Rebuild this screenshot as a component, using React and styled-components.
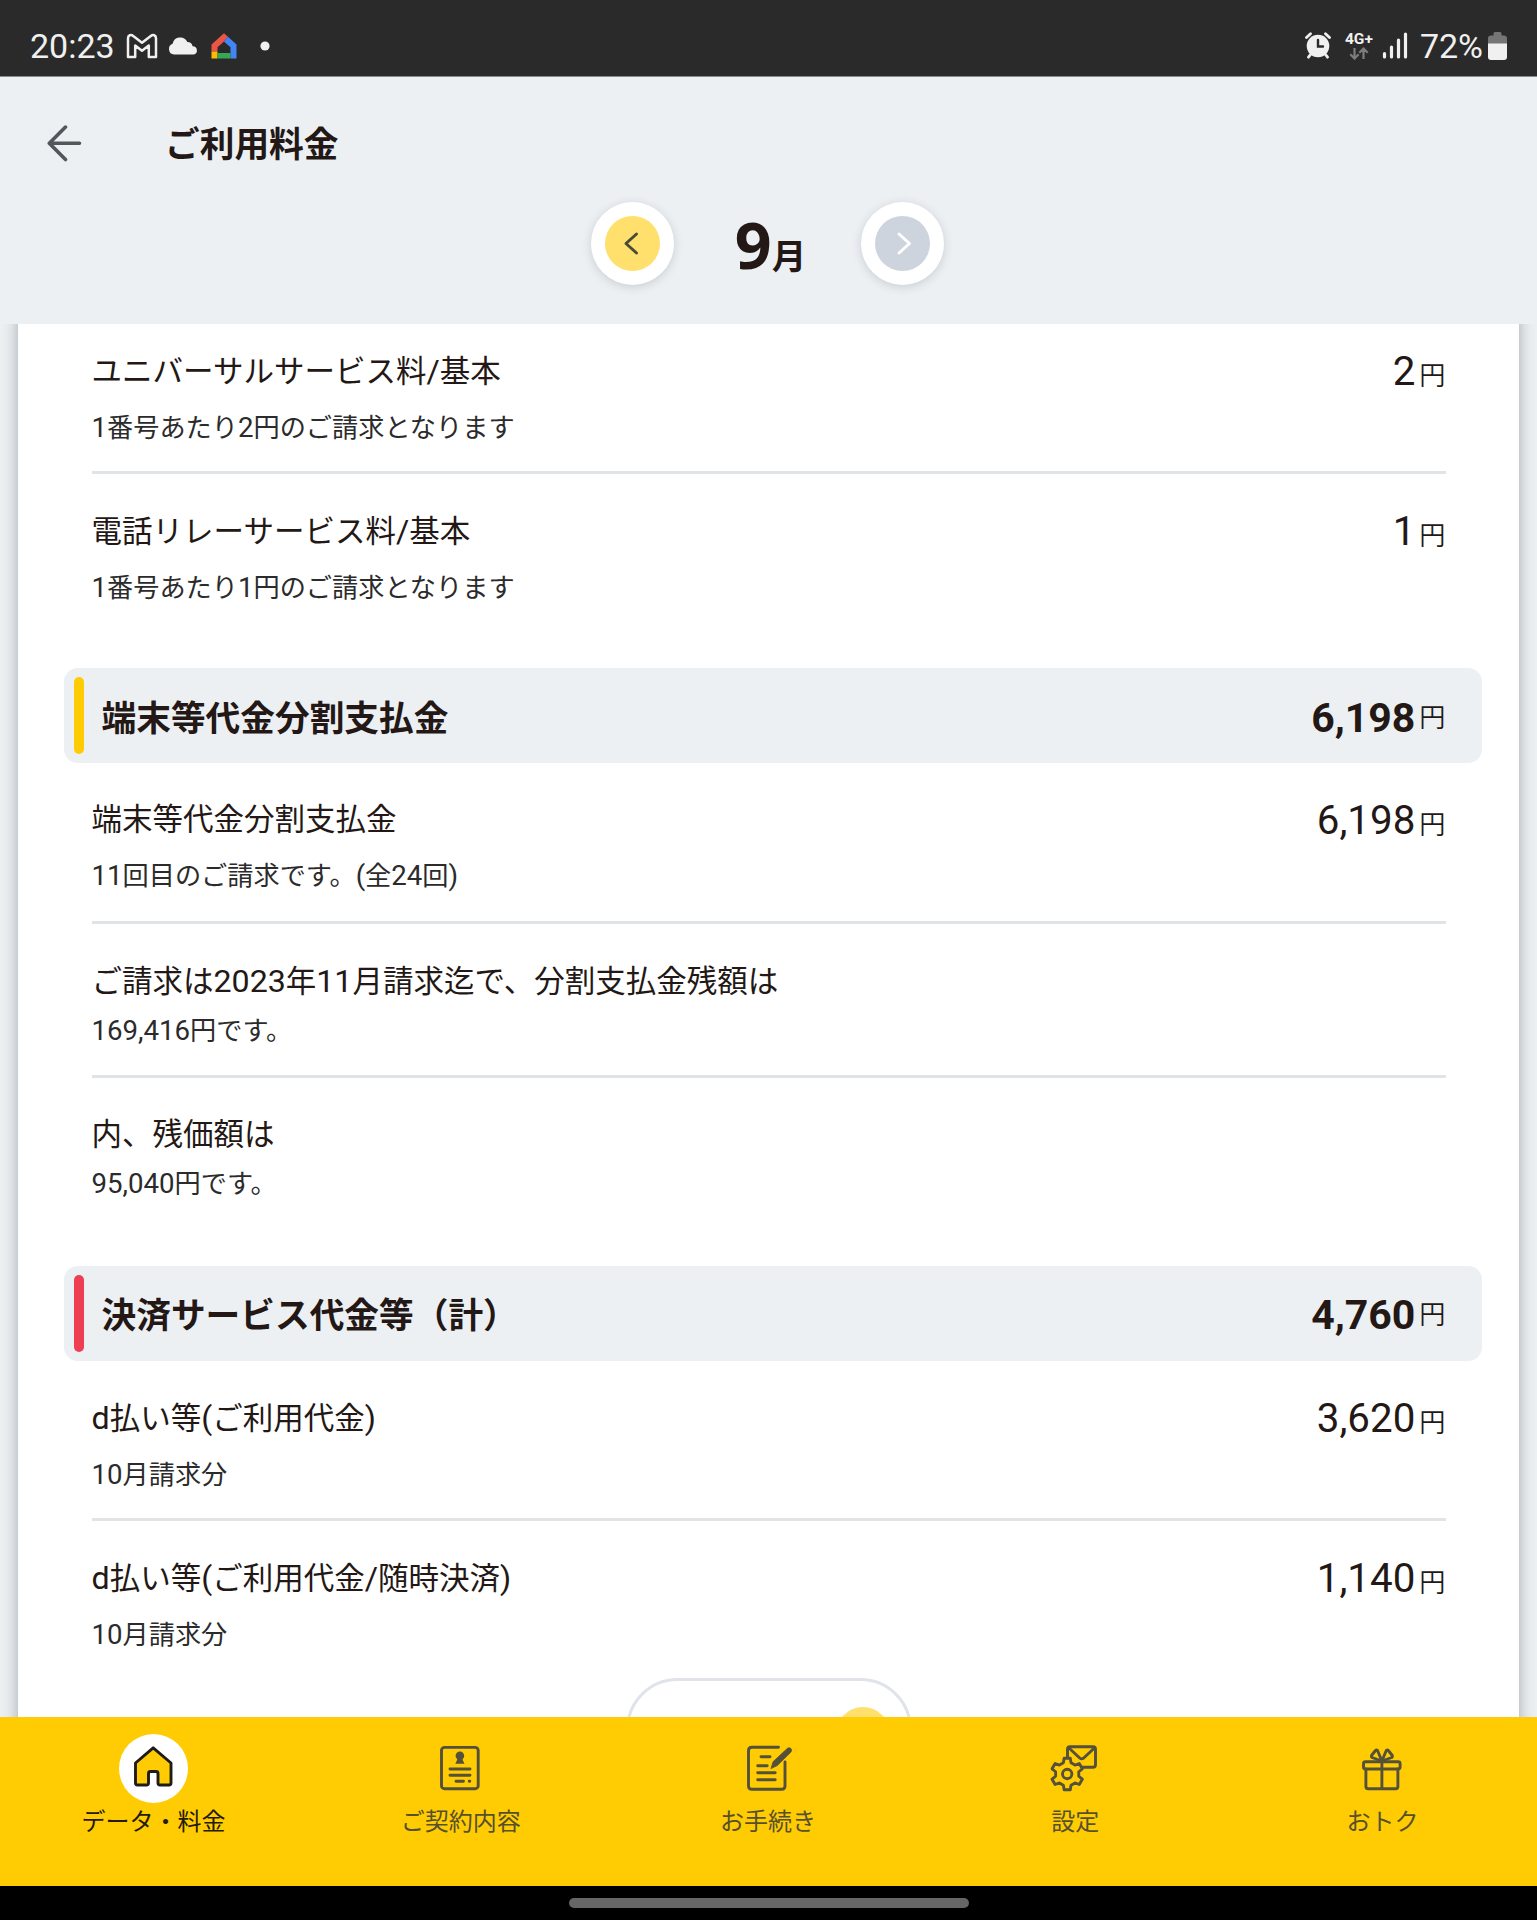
import styled, { createGlobalStyle } from "styled-components";

const GlobalStyle = createGlobalStyle`
  * {
    box-sizing: border-box;
  }
  body {
    margin: 0;
    background: #000;
    font-family: Roboto, "Noto Sans CJK JP", sans-serif;
    color: #231815;
  }
`;

const Screen = styled.div`
  width: 1537px;
  height: 1920px;
  display: flex;
  flex-direction: column;
  overflow: hidden;
  background: #ecf0f3;
`;

const StatusBar = styled.div`
  flex: none;
  height: 77px;
  padding: 15px 30px 0 30px;
  display: flex;
  justify-content: space-between;
  align-items: flex-start;
  background: #2a2a2a;
  border-bottom: 1px solid #8a8a8c;
  color: #f0f0f0;
`;

const StatusGroup = styled.div`
  height: 61px;
  display: flex;
  align-items: center;
`;

const StatusText = styled.span`
  padding-top: 1px;
  font-size: 34px;
  line-height: 61px;
  white-space: nowrap;
`;

const StatusIcon = styled.svg`
  display: block;
  flex: none;
  margin-left: ${({ $gap }) => $gap || 0}px;
`;

const Network = styled.div`
  width: 28px;
  margin-left: 14px;
  display: flex;
  flex-direction: column;
  align-items: center;
  font-size: 15.5px;
  font-weight: 700;
  line-height: 15px;
`;

const Header = styled.header`
  flex: none;
  height: 247px;
  padding-top: 36px;
`;

const TitleRow = styled.div`
  height: 62px;
  padding-left: 46px;
  display: flex;
  align-items: center;
`;

const PageTitle = styled.h1`
  margin: 0 0 0 81px;
  padding-top: 2px;
  font-size: 34.7px;
  line-height: 50px;
  font-weight: 700;
`;

const MonthRow = styled.div`
  margin-top: 26px;
  height: 84px;
  padding-right: 2px;
  display: flex;
  justify-content: center;
  align-items: center;
`;

const RoundButton = styled.button`
  width: 83px;
  height: 83px;
  padding: 14px;
  border: none;
  border-radius: 50%;
  background: #fff;
  box-shadow: 0 2px 10px rgba(60, 70, 80, 0.2);
`;

const RoundFace = styled.span`
  display: flex;
  width: 55px;
  height: 55px;
  border-radius: 50%;
  background: ${({ $disabled }) => ($disabled ? "#ced4dd" : "#ffe06c")};
`;

const Month = styled.div`
  width: 187px;
  padding: 12px 0 0 6px;
  display: flex;
  justify-content: center;
  align-items: baseline;
  font-family: "Noto Sans", "Noto Sans CJK JP", sans-serif;
  font-size: 64.5px;
  font-weight: 700;
  line-height: 84px;
`;

const MonthUnit = styled.span`
  font-family: "Noto Sans CJK JP", sans-serif;
  font-size: 34.6px;
`;

const Content = styled.main`
  flex: 1;
  min-height: 0;
  padding: 0 18px;
  overflow: hidden;
`;

const Panel = styled.div`
  height: 1500px;
  margin-top: -10.4px;
  padding: 0 37px 0 46px;
  background: #fff;
  box-shadow: 0 0 14px rgba(40, 50, 60, 0.38);
`;

const Rows = styled.div`
  padding: 0 36.5px 0 27.5px;
  margin-bottom: ${({ $last }) => ($last ? 0 : 34)}px;
`;

const Row = styled.div`
  height: ${({ $tight }) => ($tight ? 154 : 160.3)}px;
  padding-top: 36px;
  display: flex;
  justify-content: space-between;
  border-bottom: 3px solid #e1e4e7;

  &:last-child {
    border-bottom-color: transparent;
  }
`;

const RowTitle = styled.div`
  padding-top: 1px;
  font-size: 30.5px;
  line-height: 40px;
`;

const RowNote = styled.div`
  margin-top: ${({ $tight }) => ($tight ? 9.5 : 16)}px;
  font-size: 26.2px;
  line-height: 40px;
  color: #2b2b2b;
`;

const Latin = styled.span`
  font-size: 1.055em;
`;

const Amount = styled.div`
  padding-top: ${({ $strong }) => ($strong ? 4 : 0)}px;
  display: flex;
  align-items: ${({ $strong }) => ($strong ? "center" : "baseline")};
  font-size: ${({ $strong }) => ($strong ? 41 : 40.3)}px;
  line-height: 44px;
  font-weight: ${({ $strong }) => ($strong ? 700 : 400)};
`;

const Yen = styled.span`
  margin-left: 4px;
  font-size: 26.2px;
  font-weight: 350;
`;

const SectionHead = styled.div`
  height: 95px;
  padding: 9px 36.5px 9px 10px;
  display: flex;
  align-items: center;
  border-radius: 14px;
  background: #ecf0f3;
`;

const Marker = styled.span`
  width: 10px;
  height: 77px;
  border-radius: 5px;
  background: ${({ $color }) => $color};
`;

const SectionTitle = styled.h2`
  flex: 1;
  margin: 0 0 0 17.5px;
  padding-top: 6px;
  font-size: 34.7px;
  line-height: 50px;
  font-weight: 700;
`;

const MoreButton = styled.button`
  display: flex;
  justify-content: flex-end;
  align-items: center;
  width: 286px;
  height: 103px;
  margin: -3px auto 0 562px;
  padding: 8px 19px 0 0;
  border: 3px solid #e0e3e9;
  border-radius: 52px;
  background: #fff;
`;

const MoreDot = styled.span`
  width: 54px;
  height: 54px;
  border-radius: 50%;
  background: #ffe06c;
`;

const TabBar = styled.nav`
  flex: none;
  height: 169px;
  padding: 17px 1px 0 0;
  display: grid;
  grid-template-columns: repeat(5, 1fr);
  background: #ffcb03;
`;

const Tab = styled.div`
  display: flex;
  flex-direction: column;
  align-items: center;
  font-size: 24px;
  line-height: 38px;
  color: ${({ $active }) => ($active ? "#231a08" : "#56502c")};
`;

const TabIcon = styled.svg`
  display: block;
  width: 69px;
  height: 69px;
  border-radius: 50%;
  background: ${({ $active }) => ($active ? "#fff" : "none")};
  fill: none;
  stroke: ${({ $active }) => ($active ? "#1f1c17" : "#54503a")};
  stroke-width: 2.9;
  stroke-linecap: round;
  stroke-linejoin: round;
`;

const GestureBar = styled.div`
  flex: none;
  height: 34px;
  display: flex;
  justify-content: center;
  align-items: center;
  background: #000;
`;

const GestureHandle = styled.span`
  width: 400px;
  height: 10px;
  border-radius: 5px;
  background: #666;
`;

const GmailIcon = () => (
  <StatusIcon $gap={11} width="32" height="26" viewBox="0 0 32 26">
    <path
      d="M2 5.2C2 2 5 1.2 7.2 2.9L16 9.8l8.800-6.900C27 1.200 30 2 30 5.200V24h-7.200V12.600L16 17.800l-6.800-5.200V24H2z"
      fill="none"
      stroke="#f0f0f0"
      strokeWidth="2.5"
      strokeLinejoin="round"
    />
  </StatusIcon>
);

const CloudIcon = () => (
  <StatusIcon $gap={10} width="30" height="18" viewBox="0 0 30 18">
    <path
      d="M6 17.500A5.600 5.600 0 0 1 4.600 6.700 7.800 7.800 0 0 1 19.300 5.100a5.400 5.400 0 0 1 5.300 4.100A4.200 4.200 0 0 1 25.600 17.500z"
      fill="#f0f0f0"
    />
  </StatusIcon>
);

const HomeAppIcon = () => (
  <StatusIcon $gap={13} width="26" height="26" viewBox="0 0 26 26">
    <path d="M.5 18.500V11.500L13 .3l4 3.500-4.300 4.900-6.200 5.500v4.300z" fill="#ea5545" />
    <path d="M17 3.800l8.500 7.600V25.500h-6V14.200l-6.600-5.700z" fill="#4285f4" />
    <path d="M.5 18.500h6v7h-6z" fill="#fbbc04" />
    <path d="M6.500 20h13v5.500h-13z" fill="#34a853" />
  </StatusIcon>
);

const AlarmIcon = () => (
  <StatusIcon width="26" height="27" viewBox="0 0 26 27">
    <circle cx="13" cy="14" r="11.300" fill="#f0f0f0" />
    <path
      d="M1.500 5.500l4-3.700M24.500 5.500l-4-3.700M5.500 22.500l-2 2.700M20.500 22.500l2 2.700"
      stroke="#f0f0f0"
      strokeWidth="2.800"
      strokeLinecap="round"
    />
    <path d="M13 8v6.500h5" fill="none" stroke="#2a2a2a" strokeWidth="2.400" strokeLinecap="round" />
  </StatusIcon>
);

const TrafficIcon = () => (
  <StatusIcon width="20" height="13" viewBox="0 0 20 13">
    <path
      d="M5.500 1v10.500M1.300 7.300l4.200 4.200 4.200-4.200M14.500 12V1.500M10.300 5.700l4.200-4.200 4.200 4.200"
      fill="none"
      stroke="#7d7d7d"
      strokeWidth="2.200"
    />
  </StatusIcon>
);

const SignalIcon = () => (
  <StatusIcon $gap={9} width="26" height="27" viewBox="0 0 26 27">
    <path
      d="M2.500 21.500v3.500M9.500 15v10M16.500 8v17M23.500 2v23"
      stroke="#f0f0f0"
      strokeWidth="3.200"
      strokeLinecap="round"
    />
  </StatusIcon>
);

const BatteryIcon = () => (
  <StatusIcon $gap={5} width="19" height="28" viewBox="0 0 19 28">
    <path
      d="M5.500 1.500a1.500 1.500 0 0 1 1.500-1.500h5a1.500 1.500 0 0 1 1.500 1.500V3.500h2.500a3 3 0 0 1 3 3V12H0V6.500a3 3 0 0 1 3-3h2.500z"
      fill="#757575"
    />
    <path d="M0 11.500h19V25a3 3 0 0 1-3 3H3a3 3 0 0 1-3-3z" fill="#f0f0f0" />
  </StatusIcon>
);

const BackIcon = () => (
  <svg width="38" height="38" viewBox="0 0.7 38 38">
    <path
      d="M33.500 19H3.500M19.500 2.800L3.300 19l16.200 16.200"
      fill="none"
      stroke="#53575d"
      strokeWidth="3.600"
      strokeLinecap="round"
      strokeLinejoin="round"
    />
  </svg>
);

const Chevron = ({ d, color }) => (
  <svg width="55" height="55" viewBox="0 0 55 55">
    <path d={d} fill="none" stroke={color} strokeWidth="3" strokeLinecap="round" strokeLinejoin="round" />
  </svg>
);

// six-toothed cog centred on (cx, cy)
const gearPath = (cx, cy) => {
  const points = [];
  for (let tooth = 0; tooth < 6; tooth++) {
    [[-19, 11.8], [-11, 16], [11, 16], [19, 11.8]].forEach(([offset, r]) => {
      const a = ((tooth * 60 - 90 + offset) * Math.PI) / 180;
      points.push(`${(cx + r * Math.cos(a)).toFixed(2)} ${(cy + r * Math.sin(a)).toFixed(2)}`);
    });
  }
  return `M${points.join("L")}Z`;
};

const tabs = [
  {
    label: "データ・料金",
    active: true,
    icon: (
      <path
        d="M34.700 14.800L17 30v20q0 2 2 2h9q2 0 2-2v-9.500q0-2 2-2h5.500q2 0 2 2V50q0 2 2 2h9q2 0 2-2V30z"
        fill="#ffcb03"
      />
    ),
  },
  {
    label: "ご契約内容",
    icon: (
      <>
        <rect x="16" y="14.400" width="36.700" height="41.300" rx="3" />
        <circle cx="34.400" cy="22.800" r="4.300" fill="#54503a" stroke="none" />
        <path d="M32 24h4.800l.4 3 1.800 3.700h-9.200l1.800-3.700z" fill="#54503a" stroke="none" />
        <path d="M24.500 36h20M24.500 42.200h20M30.500 48.300h7.500M43.700 48.300h.6" />
      </>
    ),
  },
  {
    label: "お手続き",
    icon: (
      <>
        <path d="M46 14.300H19.500q-3.500 0-3.500 3.500V53q0 3.300 3.500 3.300H49q3.500 0 3.500-3.300V29" />
        <path d="M28.500 23.800h9M25.200 32.700h9.500M25.200 39.700h17.500M25.200 46.700h17.500" />
        <path
          d="M38.600 35.200l2-6.500L55 15.300q1.700-1.400 3.400.2 1.500 1.700.1 3.400L44.800 32.500z"
          fill="#54503a"
          strokeWidth="0.800"
        />
      </>
    ),
  },
  {
    label: "設定",
    icon: (
      <>
        <rect x="27" y="13.700" width="28" height="20.500" rx="2.500" />
        <path d="M28.500 15l10.700 10q2 1.700 4 0l10.700-10" />
        <path d={gearPath(26.700, 41)} fill="#ffcb03" />
        <circle cx="26.700" cy="41" r="4.700" />
      </>
    ),
  },
  {
    label: "おトク",
    icon: (
      <>
        <rect x="16" y="28.700" width="36.600" height="7.300" rx="2" />
        <path d="M18.400 36v17.500q0 2.200 2.200 2.200h27.600q2.200 0 2.200-2.200V36M34.400 28.700v27" />
        <path d="M34.400 28L24.500 24.500q-1-.8-.5-2l4-5q1-1 2 0zM34.400 28l9.900-3.500q1-.8.5-2l-4-5q-1-1-2 0z" />
      </>
    ),
  },
];

const sections = [
  {
    rows: [
      { title: "ユニバーサルサービス料/基本", note: "1番号あたり2円のご請求となります", amount: "2" },
      { title: "電話リレーサービス料/基本", note: "1番号あたり1円のご請求となります", amount: "1" },
    ],
  },
  {
    title: "端末等代金分割支払金",
    total: "6,198",
    color: "#ffcb03",
    rows: [
      { title: "端末等代金分割支払金", note: "11回目のご請求です。(全24回)", amount: "6,198" },
      { title: "ご請求は2023年11月請求迄で、分割支払金残額は", note: "169,416円です。" },
      { title: "内、残価額は", note: "95,040円です。" },
    ],
  },
  {
    title: "決済サービス代金等（計）",
    total: "4,760",
    color: "#ee3f52",
    rows: [
      { title: "d払い等(ご利用代金)", note: "10月請求分", amount: "3,620" },
      { title: "d払い等(ご利用代金/随時決済)", note: "10月請求分", amount: "1,140" },
    ],
  },
];

// digits and brackets are set slightly larger than the kana around them
const mixedText = (text) =>
  text.split(/([!-~]+)/).map((part, i) => (i % 2 ? <Latin key={i}>{part}</Latin> : part));

const Section = ({ section, last }) => (
  <>
    {section.title && (
      <SectionHead>
        <Marker $color={section.color} />
        <SectionTitle>{section.title}</SectionTitle>
        <Amount $strong>
          {section.total}
          <Yen>円</Yen>
        </Amount>
      </SectionHead>
    )}
    <Rows $last={last}>
      {section.rows.map((row) => (
        <Row key={row.title} $tight={!row.amount}>
          <div>
            <RowTitle>{mixedText(row.title)}</RowTitle>
            <RowNote $tight={!row.amount}>{mixedText(row.note)}</RowNote>
          </div>
          {row.amount && (
            <Amount>
              {row.amount}
              <Yen>円</Yen>
            </Amount>
          )}
        </Row>
      ))}
    </Rows>
  </>
);

const App = () => {
  return (
    <Screen>
      <GlobalStyle />
      <StatusBar>
        <StatusGroup>
          <StatusText>20:23</StatusText>
          <GmailIcon />
          <CloudIcon />
          <HomeAppIcon />
          <StatusIcon $gap={23} width="10" height="10" viewBox="0 0 10 10">
            <circle cx="5" cy="5" r="4.600" fill="#f0f0f0" />
          </StatusIcon>
        </StatusGroup>
        <StatusGroup>
          <AlarmIcon />
          <Network>
            4G+
            <TrafficIcon />
          </Network>
          <SignalIcon />
          <StatusIcon width="12" height="1" />
          <StatusText>72%</StatusText>
          <BatteryIcon />
        </StatusGroup>
      </StatusBar>
      <Header>
        <TitleRow>
          <BackIcon />
          <PageTitle>ご利用料金</PageTitle>
        </TitleRow>
        <MonthRow>
          <RoundButton>
            <RoundFace>
              <Chevron d="M31.500 18L21 27.500 31.500 37" color="#4a4a38" />
            </RoundFace>
          </RoundButton>
          <Month>
            9<MonthUnit>月</MonthUnit>
          </Month>
          <RoundButton>
            <RoundFace $disabled>
              <Chevron d="M24 18L34.500 27.500 24 37" color="#fff" />
            </RoundFace>
          </RoundButton>
        </MonthRow>
      </Header>
      <Content>
        <Panel>
          {sections.map((section, i) => (
            <Section key={i} section={section} last={i === sections.length - 1} />
          ))}
          <MoreButton>
            <MoreDot />
          </MoreButton>
        </Panel>
      </Content>
      <TabBar>
        {tabs.map((tab) => (
          <Tab key={tab.label} $active={tab.active}>
            <TabIcon $active={tab.active} viewBox="0.5 1 69 69">
              {tab.icon}
            </TabIcon>
            {tab.label}
          </Tab>
        ))}
      </TabBar>
      <GestureBar>
        <GestureHandle />
      </GestureBar>
    </Screen>
  );
};

export default App;
